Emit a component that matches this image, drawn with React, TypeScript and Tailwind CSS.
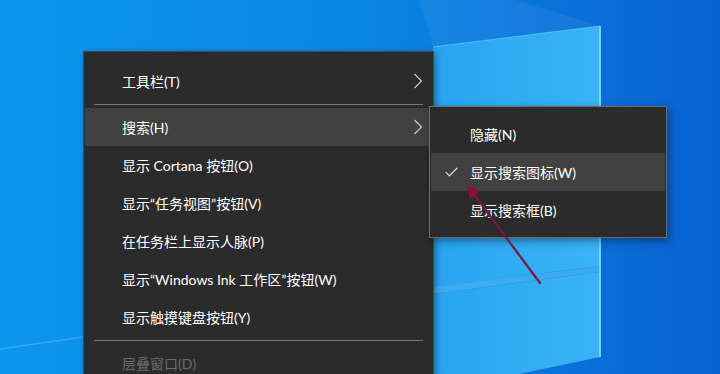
import React from "react";

type MenuEntry =
  | { kind: "item"; label: string; submenu?: boolean; active?: boolean; disabled?: boolean }
  | { kind: "separator" };

const mainMenu: MenuEntry[] = [
  { kind: "item", label: "工具栏(T)", submenu: true },
  { kind: "separator" },
  { kind: "item", label: "搜索(H)", submenu: true, active: true },
  { kind: "item", label: "显示 Cortana 按钮(O)" },
  { kind: "item", label: "显示“任务视图”按钮(V)" },
  { kind: "item", label: "在任务栏上显示人脉(P)" },
  { kind: "item", label: "显示“Windows Ink 工作区”按钮(W)" },
  { kind: "item", label: "显示触摸键盘按钮(Y)" },
  { kind: "separator" },
  { kind: "item", label: "层叠窗口(D)", disabled: true },
];

const searchMenu = [
  { label: "隐藏(N)", checked: false },
  { label: "显示搜索图标(W)", checked: true },
  { label: "显示搜索框(B)", checked: false },
];

const Chevron = () => (
  <svg width="10" height="16" viewBox="0 0 10 16" className="shrink-0">
    <polyline points="1.5,1 8.5,8 1.5,15" fill="none" stroke="#c9c9c9" strokeWidth="1.2" />
  </svg>
);

const Check = () => (
  <svg width="13" height="10" viewBox="0 0 13 10" className="shrink-0">
    <polyline points="0.8,5.2 4.3,8.8 12.4,0.8" fill="none" stroke="#d8d8d8" strokeWidth="1.2" />
  </svg>
);

// desktop wallpaper: the light window panes of the win10 hero image
const Wallpaper = () => (
  <svg className="absolute inset-0" width="720" height="374" viewBox="0 0 720 374">
    <defs>
      <linearGradient id="pane" x1="0" y1="0" x2="1" y2="0">
        <stop offset="0" stopColor="#27a4f1" />
        <stop offset="1" stopColor="#3ab4f5" />
      </linearGradient>
    </defs>
    <polygon points="420,0 515,0 600,26 433,47" fill="#ffffff" opacity="0.05" />
    <polygon points="433,47 600,26 600,266 433,287" fill="url(#pane)" />
    <polygon points="433,287 600,266 600,272 433,294" fill="#52c2f6" opacity="0.7" />
    <polygon points="433,294 600,272 600,357 433,392" fill="url(#pane)" />
    <line x1="600" y1="26" x2="600" y2="357" stroke="#6ad8ff" strokeWidth="2" />
    <line x1="433" y1="47" x2="600" y2="26" stroke="#5fcfff" strokeWidth="1" opacity="0.7" />
    <line x1="0" y1="349" x2="90" y2="336" stroke="#ffffff" strokeWidth="1.5" opacity="0.18" />
  </svg>
);

const App: React.FC = () => {
  return (
    <div className="relative w-[720px] h-[374px] overflow-hidden bg-[linear-gradient(90deg,#0c97ee_0%,#0b92eb_12%,#0a86e5_50%,#0a78de_70%,#0a6dd8_84%,#0861d0_100%)] font-['Lato','Noto_Sans_CJK_SC',sans-serif]">
      <Wallpaper />

      {/* taskbar context menu */}
      <div className="absolute left-[83px] top-[51px] w-[351px] h-[340px] bg-[#2b2b2b] border border-[#444444] pt-[10px] shadow-[2px_2px_6px_rgba(0,0,0,0.35)]">
        {mainMenu.map((entry, i) =>
          entry.kind === "separator" ? (
            <div key={i} className="h-[8px] flex items-center px-[10px]">
              <div className="h-px w-full bg-[#767676]" />
            </div>
          ) : (
            <div
              key={i}
              className={`h-[38px] mx-[1px] flex items-center justify-between pl-[37px] pr-[9px] text-[14px] ${
                entry.active ? "bg-[#414141]" : ""
              } ${entry.disabled ? "text-[#6b6b6b]" : "text-white"}`}
            >
              <span className="whitespace-nowrap">{entry.label}</span>
              {entry.submenu && <Chevron />}
            </div>
          )
        )}
      </div>

      {/* search submenu */}
      <div className="absolute left-[429px] top-[106px] w-[238px] h-[132px] bg-[#2b2b2b] border border-[#6c6c6c] pt-[8px] shadow-[2px_3px_8px_rgba(0,0,0,0.4)]">
        {searchMenu.map((item, i) => (
          <div
            key={i}
            className={`h-[38px] mx-[1px] flex items-center pl-[14px] gap-[12px] text-[14px] text-white ${
              item.checked ? "bg-[#414141]" : ""
            }`}
          >
            <span className="w-[13px] flex items-center">{item.checked && <Check />}</span>
            <span className="whitespace-nowrap">{item.label}</span>
          </div>
        ))}
      </div>

      {/* annotation arrow */}
      <svg className="absolute inset-0 pointer-events-none" width="720" height="374" viewBox="0 0 720 374">
        <line x1="540" y1="283" x2="473" y2="193" stroke="#741a3c" strokeWidth="2.2" strokeLinecap="round" />
        <polygon points="467,185 480,191.5 470,199.5" fill="#8a1232" />
      </svg>
    </div>
  );
};

export default App;
